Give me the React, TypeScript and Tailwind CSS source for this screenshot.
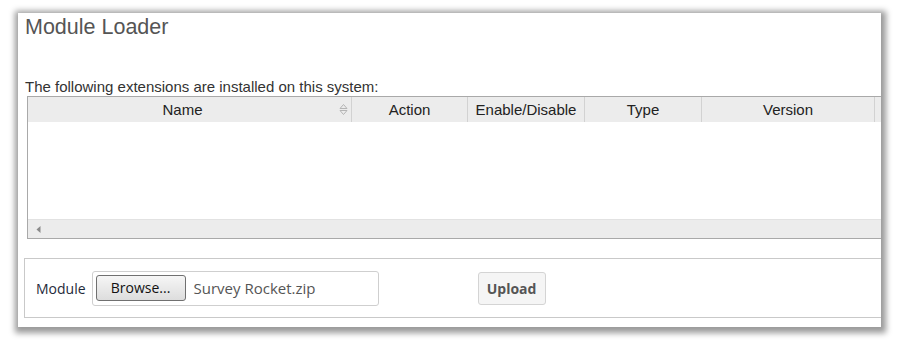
import React from "react";

const columns = [
  { label: "Name", w: "w-[324px] pr-[14px]", sort: true },
  { label: "Action", w: "w-[116px]" },
  { label: "Enable/Disable", w: "w-[117px]" },
  { label: "Type", w: "w-[117px]" },
  { label: "Version", w: "w-[173px]" },
  { label: "", w: "w-[60px]" },
];

function SortIcon() {
  return (
    <svg width="9" height="13" viewBox="0 0 9 13" className="absolute right-[3px] top-[6px]">
      <path d="M1 5.5 L4.5 1.5 L8 5.5 Z" fill="none" stroke="#b5b5b5" strokeWidth="1" />
      <path d="M1 7.5 L4.5 11.5 L8 7.5 Z" fill="none" stroke="#b5b5b5" strokeWidth="1" />
    </svg>
  );
}

export default function App() {
  return (
    <div className="w-[900px] h-[341px] bg-white pt-[13px] pl-[18px]" style={{ fontFamily: "'Liberation Sans', Arial, sans-serif" }}>
      <div className="w-[863px] h-[314px] bg-white overflow-hidden shadow-[1px_2px_6px_4px_rgba(0,0,0,0.4)]">
        {/* title */}
        <h1 className="pl-[7px] pt-[2px] text-[21.5px] leading-[24px] text-[#555]">Module Loader</h1>

        <p className="mt-[39px] pl-[7px] text-[15px] leading-[17px] text-[#333]">
          The following extensions are installed on this system:
        </p>

        {/* extensions table */}
        <div className="ml-[9px] mt-[1px] w-[920px] border border-[#a9a9a9]">
          <div className="flex h-[25px] bg-[#ececec]">
            {columns.map((c, i) => (
              <div
                key={i}
                className={`relative ${c.w} shrink-0 border-r border-[#d2d2d2] pt-[1px] text-center text-[15px] leading-[24px] text-[#222]`}
              >
                {c.label}
                {c.sort && <SortIcon />}
              </div>
            ))}
          </div>
          <div className="h-[97px] bg-white" />
          <div className="flex h-[19px] items-center border-t border-[#e2e2e2] bg-[#ececec] pl-[8px]">
            <svg width="5" height="7" viewBox="0 0 5 7">
              <path d="M4.5 0 L0.5 3.5 L4.5 7 Z" fill="#8a8a8a" />
            </svg>
          </div>
        </div>

        {/* upload form */}
        <div
          className="ml-[6px] mt-[19px] flex h-[60px] w-[900px] items-center border border-[#c9c9c9] pl-[11px]"
          style={{ fontFamily: "'Open Sans', sans-serif" }}
        >
          <span className="text-[14px] text-[#1f2a3a]">Module</span>
          <div className="ml-[6px] flex h-[35px] w-[287px] items-center rounded-[3px] border border-[#cfcfcf] pl-[3px]">
            <button className="h-[26px] w-[90px] rounded-[3px] border border-[#707070] bg-gradient-to-b from-[#f6f6f6] to-[#dddddd] text-[14px] leading-[22px] text-[#111]">
              Browse...
            </button>
            <span className="ml-[8px] text-[15px] text-[#555]">Survey Rocket.zip</span>
          </div>
          <button className="ml-[99px] h-[33px] w-[68px] rounded-[3px] border border-[#d4d4d4] bg-[#f5f5f5] text-[14px] font-bold text-[#555]">
            Upload
          </button>
        </div>
      </div>
    </div>
  );
}
